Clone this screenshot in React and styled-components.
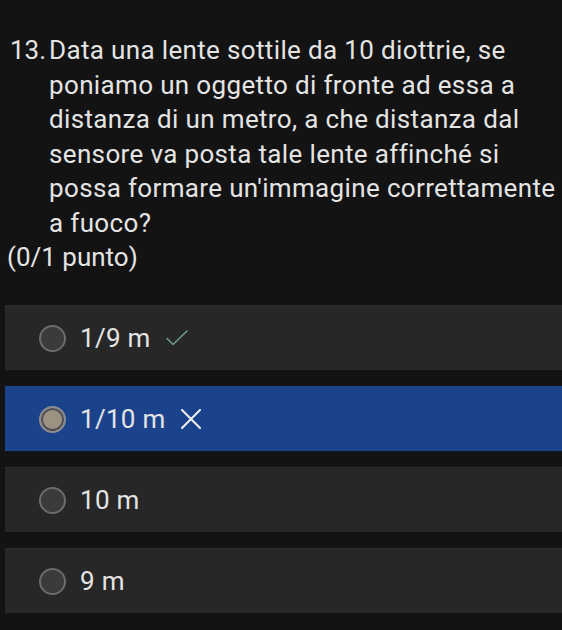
import React from 'react';
import styled, { createGlobalStyle } from 'styled-components';

const GlobalStyle = createGlobalStyle`
  html, body {
    margin: 0;
    padding: 0;
    background: #131313;
  }
  body {
    font-family: Roboto, "Liberation Sans", sans-serif;
    color: #e4e4e4;
  }
`;

const Page = styled.div`
  width: 562px;
  height: 630px;
  overflow: hidden;
  background: #131313;
  padding-top: 33px;
  box-sizing: border-box;
`;

const Question = styled.div`
  display: grid;
  grid-template-columns: 49px 1fr;
  font-size: 26px;
  line-height: 34.5px;
  letter-spacing: 0.35px;
`;

const Number = styled.span`
  padding-left: 10px;
  letter-spacing: 0;
`;

const Points = styled.div`
  padding-left: 7px;
  font-size: 26px;
  line-height: 28px;
  margin-top: 3px;
  margin-bottom: 34px;
`;

const Options = styled.div`
  display: flex;
  flex-direction: column;
  gap: 16px;
  padding-left: 5px;
`;

const Row = styled.div`
  display: flex;
  align-items: center;
  height: 65px;
  padding-left: 34px;
  gap: 16px;
  background: ${p => (p.selected ? '#1b438c' : '#272727')};
  border-top: 1px solid ${p => (p.selected ? '#1e4893' : '#2d2d2d')};
  box-sizing: border-box;
  font-size: 26px;
`;

const Radio = styled.span`
  width: 27px;
  height: 27px;
  border-radius: 50%;
  box-sizing: border-box;
  flex: none;
  border: 2px solid ${p => (p.selected ? '#8d8d8f' : '#6c6c6c')};
  background: ${p => (p.selected ? '#9c9282' : '#3b3b3b')};
  box-shadow: ${p => (p.selected ? 'inset 0 0 0 2px #4f4f55' : 'none')};
`;

const Label = styled.span`
  display: flex;
  align-items: center;
  gap: 14px;
  letter-spacing: 0.3px;
  margin-left: -2px;
`;

const Check = () => (
  <svg width="24" height="18" viewBox="0 0 24 18" fill="none">
    <path d="M2 9.5 L8 15.5 L22 2" stroke="#6a9a8e" strokeWidth="1.6" strokeLinecap="round" strokeLinejoin="round" />
  </svg>
);

const Cross = () => (
  <svg width="22" height="20" viewBox="0 0 22 20" fill="none">
    <path d="M2 1 L20 19 M20 1 L2 19" stroke="#f0f0f0" strokeWidth="2" strokeLinecap="round" />
  </svg>
);

const options = [
  { text: '1/9 m', mark: 'check' },
  { text: '1/10 m', mark: 'cross', selected: true },
  { text: '10 m' },
  { text: '9 m' },
];

export default function App() {
  return (
    <>
      <GlobalStyle />
      <Page>
        <Question>
          <Number>13.</Number>
          <span>
            Data una lente sottile da 10 diottrie, se poniamo un oggetto di fronte ad essa a
            distanza di un metro, a che distanza dal sensore va posta tale lente affinché si
            possa formare un'immagine correttamente a fuoco?
          </span>
        </Question>
        <Points>(0/1 punto)</Points>
        <Options>
          {options.map((o, i) => (
            <Row key={i} selected={o.selected}>
              <Radio selected={o.selected} />
              <Label>
                {o.text}
                {o.mark === 'check' && <Check />}
                {o.mark === 'cross' && <Cross />}
              </Label>
            </Row>
          ))}
        </Options>
      </Page>
    </>
  );
}
